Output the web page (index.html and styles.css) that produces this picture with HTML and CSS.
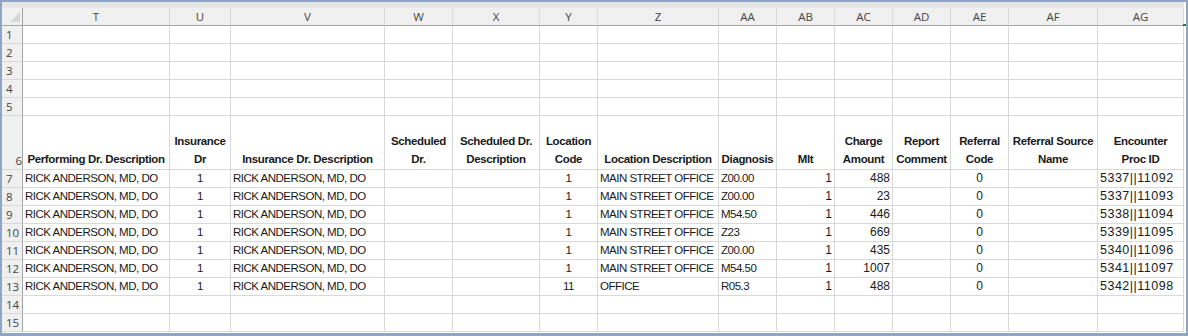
FILE: index.html
```html
<!DOCTYPE html>
<html lang="en">
<head>
  <meta charset="UTF-8" />
  <title>Encounters - Sheet</title>
  <link rel="stylesheet" href="styles.css">
</head>
<body>
  <div class="frame">
    <div class="band"></div>
    <div class="sheet">
      <div class="row colhead">
        <div class="corner"><span class="tri"></span></div>
        <div>T</div><div>U</div><div>V</div><div>W</div><div>X</div><div>Y</div><div>Z</div>
        <div>AA</div><div>AB</div><div>AC</div><div>AD</div><div>AE</div><div>AF</div><div>AG</div>
      </div>
      <span class="mark"></span>

      <div class="row"><div class="rh">1</div><div></div><div></div><div></div><div></div><div></div><div></div><div></div><div></div><div></div><div></div><div></div><div></div><div></div><div></div></div>
      <div class="row"><div class="rh">2</div><div></div><div></div><div></div><div></div><div></div><div></div><div></div><div></div><div></div><div></div><div></div><div></div><div></div><div></div></div>
      <div class="row"><div class="rh">3</div><div></div><div></div><div></div><div></div><div></div><div></div><div></div><div></div><div></div><div></div><div></div><div></div><div></div><div></div></div>
      <div class="row"><div class="rh">4</div><div></div><div></div><div></div><div></div><div></div><div></div><div></div><div></div><div></div><div></div><div></div><div></div><div></div><div></div></div>
      <div class="row"><div class="rh">5</div><div></div><div></div><div></div><div></div><div></div><div></div><div></div><div></div><div></div><div></div><div></div><div></div><div></div><div></div></div>

      <div class="row titles">
        <div class="rh">6</div>
        <div>Performing Dr. Description</div>
        <div>Insurance<br>Dr</div>
        <div>Insurance Dr. Description</div>
        <div>Scheduled<br>Dr.</div>
        <div>Scheduled Dr.<br>Description</div>
        <div>Location<br>Code</div>
        <div>Location Description</div>
        <div>Diagnosis</div>
        <div>Mlt</div>
        <div>Charge<br>Amount</div>
        <div>Report<br>Comment</div>
        <div>Referral<br>Code</div>
        <div>Referral Source<br>Name</div>
        <div>Encounter<br>Proc ID</div>
      </div>

      <div class="row data">
        <div class="rh">7</div><div>RICK ANDERSON, MD, DO</div><div class="c">1</div><div>RICK ANDERSON, MD, DO</div><div></div><div></div><div class="c">1</div><div>MAIN STREET OFFICE</div><div>Z00.00</div><div class="num r">1</div><div class="num r">488</div><div></div><div class="num c">0</div><div></div><div class="num id">5337||11092</div>
      </div>
      <div class="row data">
        <div class="rh">8</div><div>RICK ANDERSON, MD, DO</div><div class="c">1</div><div>RICK ANDERSON, MD, DO</div><div></div><div></div><div class="c">1</div><div>MAIN STREET OFFICE</div><div>Z00.00</div><div class="num r">1</div><div class="num r">23</div><div></div><div class="num c">0</div><div></div><div class="num id">5337||11093</div>
      </div>
      <div class="row data">
        <div class="rh">9</div><div>RICK ANDERSON, MD, DO</div><div class="c">1</div><div>RICK ANDERSON, MD, DO</div><div></div><div></div><div class="c">1</div><div>MAIN STREET OFFICE</div><div>M54.50</div><div class="num r">1</div><div class="num r">446</div><div></div><div class="num c">0</div><div></div><div class="num id">5338||11094</div>
      </div>
      <div class="row data">
        <div class="rh">10</div><div>RICK ANDERSON, MD, DO</div><div class="c">1</div><div>RICK ANDERSON, MD, DO</div><div></div><div></div><div class="c">1</div><div>MAIN STREET OFFICE</div><div>Z23</div><div class="num r">1</div><div class="num r">669</div><div></div><div class="num c">0</div><div></div><div class="num id">5339||11095</div>
      </div>
      <div class="row data">
        <div class="rh">11</div><div>RICK ANDERSON, MD, DO</div><div class="c">1</div><div>RICK ANDERSON, MD, DO</div><div></div><div></div><div class="c">1</div><div>MAIN STREET OFFICE</div><div>Z00.00</div><div class="num r">1</div><div class="num r">435</div><div></div><div class="num c">0</div><div></div><div class="num id">5340||11096</div>
      </div>
      <div class="row data">
        <div class="rh">12</div><div>RICK ANDERSON, MD, DO</div><div class="c">1</div><div>RICK ANDERSON, MD, DO</div><div></div><div></div><div class="c">1</div><div>MAIN STREET OFFICE</div><div>M54.50</div><div class="num r">1</div><div class="num r">1007</div><div></div><div class="num c">0</div><div></div><div class="num id">5341||11097</div>
      </div>
      <div class="row data">
        <div class="rh">13</div><div>RICK ANDERSON, MD, DO</div><div class="c">1</div><div>RICK ANDERSON, MD, DO</div><div></div><div></div><div class="c">11</div><div>OFFICE</div><div>R05.3</div><div class="num r">1</div><div class="num r">488</div><div></div><div class="num c">0</div><div></div><div class="num id">5342||11098</div>
      </div>

      <div class="row"><div class="rh">14</div><div></div><div></div><div></div><div></div><div></div><div></div><div></div><div></div><div></div><div></div><div></div><div></div><div></div><div></div></div>
      <div class="row"><div class="rh">15</div><div></div><div></div><div></div><div></div><div></div><div></div><div></div><div></div><div></div><div></div><div></div><div></div><div></div><div></div></div>
    </div>
  </div>
</body>
</html>
```

FILE: styles.css
```css
* {
  box-sizing: border-box;
}
body {
  margin: 0;
  background-color: #fff;
  font-family: 'Liberation Sans', Arial, sans-serif;
  font-size: 11.5px;
  color: #1a1a1a;
}
.frame {
  width: 1188px;
  height: 336px;
  border: 2px solid #8ea5c8;
  border-bottom-width: 3px;
  padding-right: 2px;
  overflow: hidden;
  background-color: #fff;
}
.band {
  height: 6px;
  background-color: #e6e6e6;
}
.sheet {
  position: relative;
  width: 1182px;
}
.row {
  display: grid;
  grid-template-columns: 21px 147px 61px 154px 68px 87px 58px 121px 58px 58px 58px 58px 58px 89px 86px;
  height: 18px;
}
.row > div {
  border-right: 1px solid #d9d9d9;
  border-bottom: 1px solid #d9d9d9;
  padding: 0 2px;
  line-height: 17px;
  white-space: nowrap;
  overflow: hidden;
  letter-spacing: -0.5px;
}

/* column letters */
.colhead > div {
  background-color: #f0f0f0;
  border-bottom-color: #a6a6a6;
  text-align: center;
  font-family: 'Open Sans', 'Liberation Sans', sans-serif;
  font-size: 11.5px;
  color: #444;
  line-height: 17px;
  letter-spacing: 0;
}
.corner {
  position: relative;
  border-right-color: #a6a6a6 !important;
}
.tri {
  position: absolute;
  right: 2px;
  bottom: 3px;
  width: 0;
  height: 0;
  border-left: 10px solid transparent;
  border-bottom: 10px solid #d6d6d6;
}
.mark {
  position: absolute;
  right: -2px;
  top: 16px;
  width: 3px;
  height: 2px;
  background-color: #217346;
}

/* row numbers */
.row > .rh {
  background-color: #f0f0f0;
  border-right-color: #a6a6a6;
  font-family: 'Open Sans', 'Liberation Sans', sans-serif;
  font-size: 11.5px;
  color: #444;
  padding-left: 4px;
  padding-right: 0;
  letter-spacing: 0;
  display: flex;
  align-items: flex-end;
}

.titles {
  height: 54px;
}
.titles > div {
  display: flex;
  flex-direction: column;
  justify-content: flex-end;
  text-align: center;
  font-weight: bold;
  line-height: 18px;
  letter-spacing: -0.35px;
  padding: 0 1px 1px;
}
.titles > .rh {
  flex-direction: row;
  font-weight: normal;
  line-height: 17px;
  padding-bottom: 0;
}

.c {
  text-align: center;
}
.r {
  text-align: right;
}
.row > .num {
  font-family: 'Liberation Sans', Arial, sans-serif;
  font-size: 12px;
  letter-spacing: 0;
}
.row > .id {
  font-size: 12.5px;
  letter-spacing: 0.5px;
}
```
